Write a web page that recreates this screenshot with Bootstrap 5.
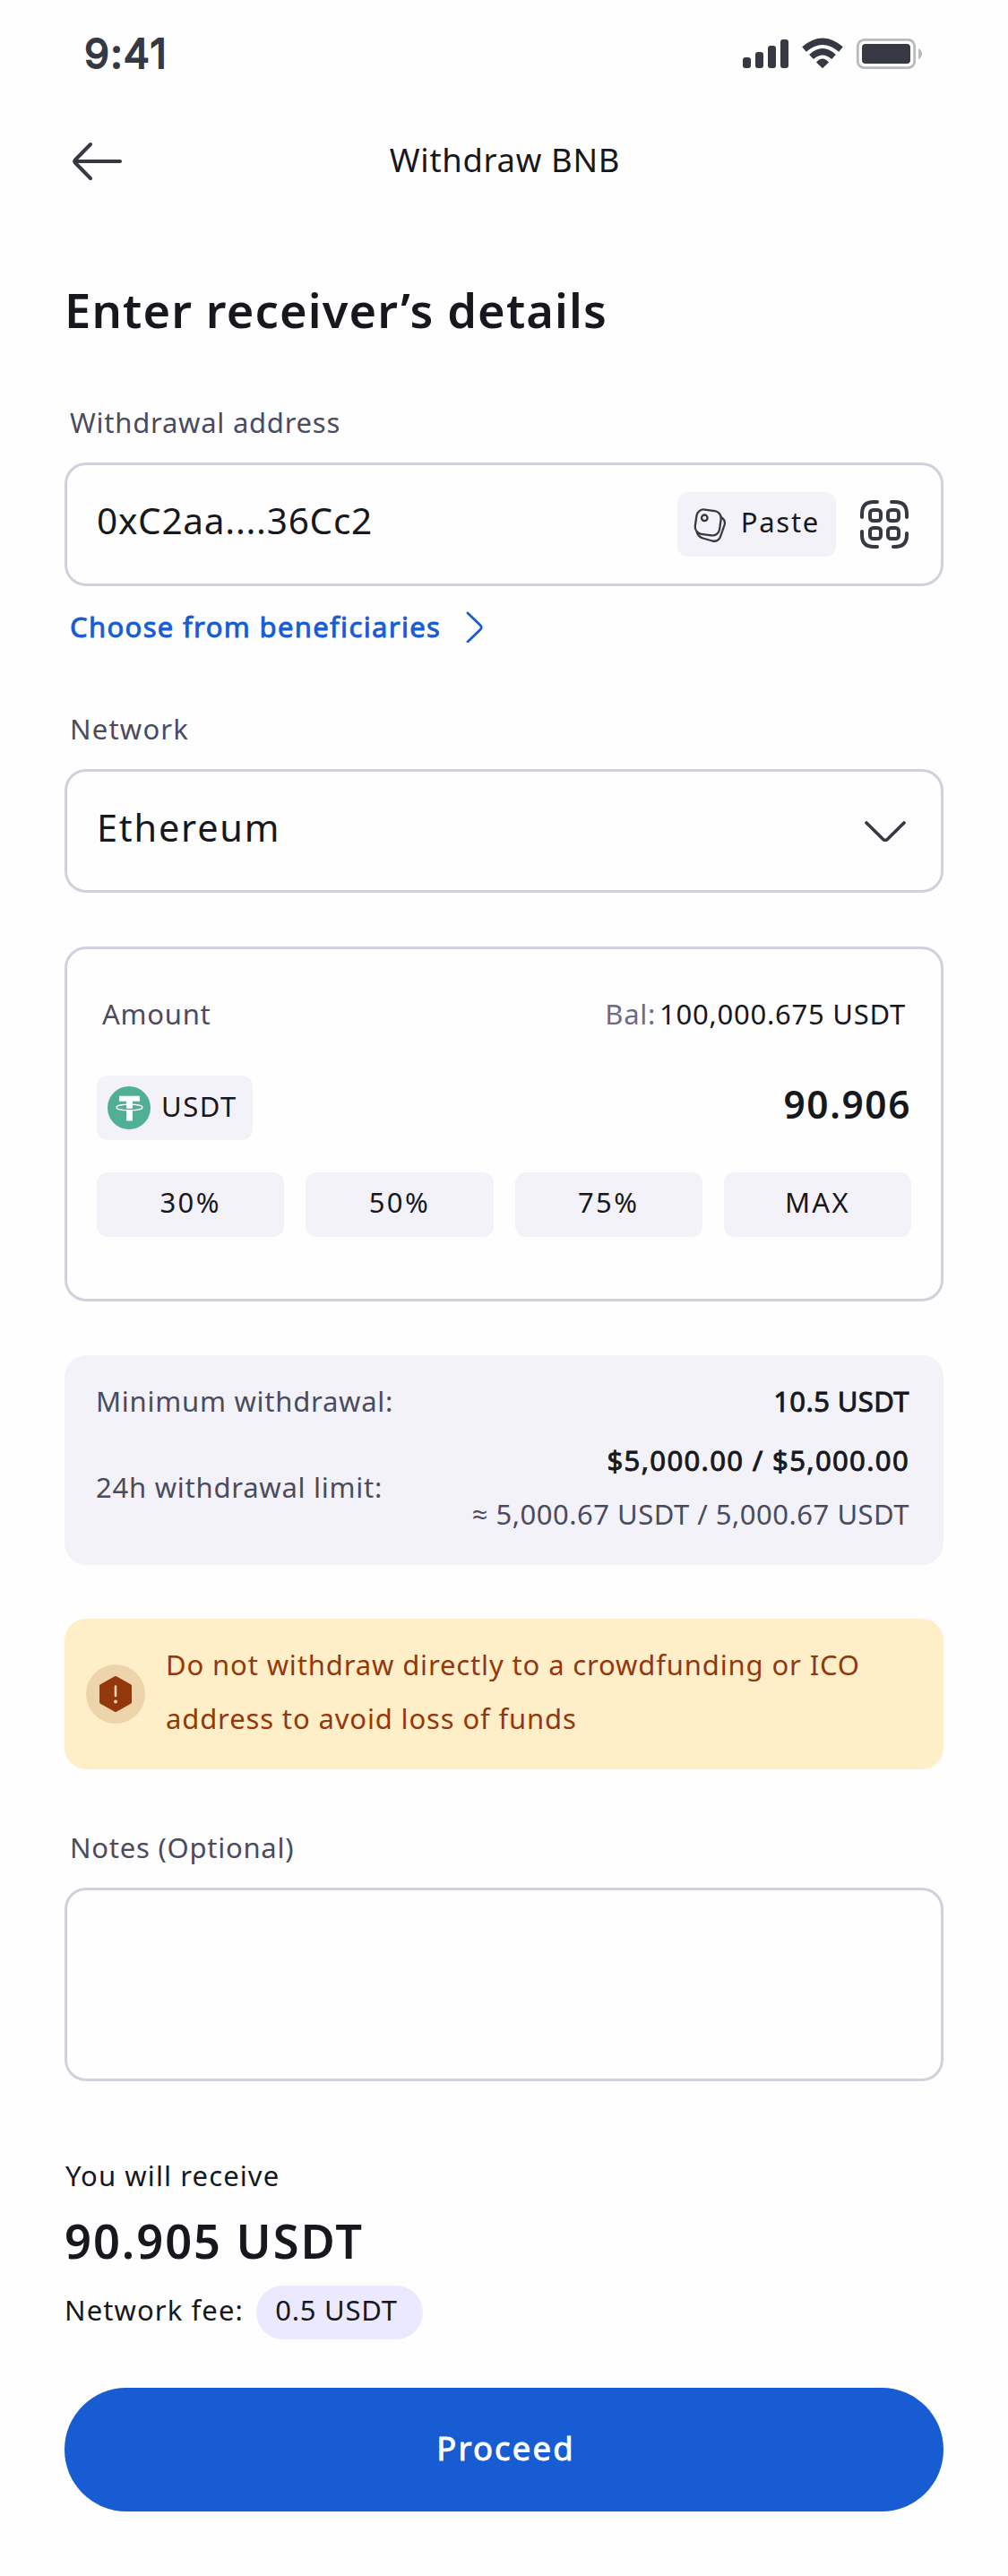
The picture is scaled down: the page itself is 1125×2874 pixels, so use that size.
<!DOCTYPE html>
<html lang="en">
<head>
<meta charset="utf-8">
<meta name="viewport" content="width=device-width, initial-scale=1">
<title>Withdraw BNB</title>
<link href="https://cdn.jsdelivr.net/npm/bootstrap@5.3.0/dist/css/bootstrap.min.css" rel="stylesheet">
<style>
  :root { --ink:#17181e; --soft:#4a4b5e; --line:#d1d0de; --fill:#f3f2f8; --blue:#175cd3; --icon:#363843; }
  body { background:#fefefe; color:var(--ink); font-family:"Noto Sans","Open Sans",sans-serif; font-size:31px; line-height:60px; letter-spacing:.75px; white-space:nowrap; }
  svg { display:block; flex:none; }
  .screen { width:1125px; height:2874px; }
  .status-bar { height:120px; padding:0 95px 0 94px; }
  .clock { font:400 45.2px/60px Inter,sans-serif; letter-spacing:1.4px; color:var(--icon); -webkit-text-stroke:1.8px currentColor; }
  .top-nav { height:120px; padding:0 81px; }
  .top-nav h1 { font-size:36.4px; line-height:60px; letter-spacing:.7px; padding-bottom:4px; }
  .side { width:54px; }
  .page-body { padding:76px 72px 0; }
  .title { font-size:52.4px; line-height:60px; font-weight:600; letter-spacing:1.15px; margin-bottom:65px; }
  .medium { -webkit-text-stroke:.9px currentColor; }
  .soft { color:var(--soft); }
  .field-label { color:var(--soft); padding-left:6px; margin-bottom:15px; display:block; }
  .net-label { letter-spacing:1.2px; }
  .field-box { border:3px solid var(--line); border-radius:24px; background:transparent; }
  .field-row { height:138px; padding:0 33px; }
  .value { font-size:40.5px; padding-bottom:8px; }
  .value.eth { font-size:41.4px; letter-spacing:1.8px; }
  .soft-btn { background:var(--fill); border:0; border-radius:12px; height:72px; color:var(--ink); font-size:31px; line-height:60px; padding:0 0 6px; letter-spacing:2.3px; }
  .paste { width:177px; padding:0 18px 0 17px; }
  .paste span { padding-bottom:6px; letter-spacing:1.7px; }
  .choose { color:var(--blue); padding-left:6px; margin:15px 0 54px; gap:28px; letter-spacing:1.35px; }
  .network { margin-bottom:60px; padding-right:39px; }
  .amount-card { height:396px; padding:42px 33px 0; margin-bottom:60px; }
  .amount-head { padding:0 6px; margin-bottom:39px; }
  .bal { color:#6a6c8c; margin-right:4px; }
  .token { width:174px; padding:0 0 0 12px; gap:12px; letter-spacing:1.5px; }
  .token span { padding-bottom:5px; }
  .amount-value { font-size:42.4px; font-weight:600; letter-spacing:1.6px; padding-bottom:8px; }
  .quick { gap:24px; margin-top:36px; }
  .info { background:var(--fill); border-radius:24px; padding:21px 38px 27px 35px; margin-bottom:60px; color:var(--soft); }
  .strong-ink { color:var(--ink); }
  .min-amount { letter-spacing:.4px; }
  .limit { margin-top:6px; }
  .limit-fiat { letter-spacing:1.35px; }
  .limit-coin { letter-spacing:.5px; }
  .warn { background:#ffefc8; border-radius:24px; color:#93370d; padding:21px 24px 27px; gap:23px; margin-bottom:57px; letter-spacing:.86px; }
  .warn svg { margin-top:6px; }
  .notes { height:216px; resize:none; display:block; margin-bottom:75px; }
  .receive { letter-spacing:1.1px; padding-left:1px; }
  .total { font-size:52.4px; font-weight:600; letter-spacing:1.95px; margin:13px 0 20px; line-height:60px; }
  .fee-label { line-height:54px; padding-bottom:6px; letter-spacing:1.1px; }
  .fee { background:#ebe9fe; border-radius:30px; height:60px; width:186px; line-height:54px; padding-right:7px; }
  .fee-row { gap:14px; }
  .proceed { background:var(--blue); color:#fff; border:0; border-radius:69px; height:138px; font-size:36.4px; letter-spacing:2.2px; margin-top:54px; padding:0 0 4px 4px; }
</style>
</head>
<body>
<div class="screen">
  <div class="status-bar d-flex justify-content-between align-items-center">
    <span class="clock">9:41</span>
    <svg width="201" height="36" viewBox="829 42 201 36" fill="#363843">
      <rect x="829" y="64" width="9" height="12" rx="3"/><rect x="843" y="58" width="9" height="18" rx="3"/><rect x="857" y="51" width="9" height="25" rx="3"/><rect x="871" y="44" width="9" height="32" rx="3"/>
      <path d="M897.500 55Q918 37.500 938.500 55M905.500 63.500Q918 52 930.500 63.500" fill="none" stroke="#363843" stroke-width="7"/>
      <path d="M911 69.500Q918 61.500 925 69.500L918 76.200Z"/>
      <rect x="957.300" y="44.300" width="63.400" height="31.400" rx="7.500" fill="none" stroke="#b9b9be" stroke-width="2.800"/>
      <rect x="962" y="49" width="54" height="22" rx="4"/><path d="M1025 54Q1029 56 1029 60T1025 66Z" fill="#b9b9be"/>
    </svg>
  </div>
  <nav class="top-nav d-flex justify-content-between align-items-center">
    <svg width="56" height="44" viewBox="0 0 56 44" fill="none" stroke="#363843" stroke-width="4" stroke-linecap="round" stroke-linejoin="round"><path d="M2 22H53M20 3L2.800 20.500Q1.500 22 2.800 23.500L20 41"/></svg>
    <h1 class="m-0 fw-normal">Withdraw BNB</h1>
    <span class="side"></span>
  </nav>
  <main class="page-body">
    <h2 class="title">Enter receiver’s details</h2>

    <label class="field-label">Withdrawal address</label>
    <div class="field-box field-row d-flex align-items-center">
      <span class="value me-auto">0xC2aa....36Cc2</span>
      <button class="soft-btn paste d-flex align-items-center justify-content-between">
        <svg width="38" height="40" viewBox="-1 -2 38 40" fill="none" stroke="#363843" stroke-width="2.300" stroke-linecap="round"><rect x="2.500" y="2.200" width="27.500" height="27.500" rx="8" transform="rotate(8 16.200 16)"/><circle cx="12.300" cy="10.800" r="3.300"/><path d="M31.500 10.500C34.500 12.500 35.500 15 34.600 18.500L30.500 30.500C29 35.500 26 37.500 21 36.500L10.500 33.500C7 32.500 5 30 3.800 27"/></svg>
        <span>Paste</span>
      </button>
      <svg class="ms-4" width="60" height="54" viewBox="-3 0 60 54" fill="none" stroke="#363843" stroke-width="4" stroke-linecap="round"><path d="M2 19V15Q2 2 15 2H19M35 2H39Q52 2 52 15V19M2 35V39Q2 52 15 52H19M52 37V39Q52 52 39 52H37"/><rect x="11" y="11" width="12" height="12" rx="3.500"/><rect x="31" y="11" width="12" height="12" rx="3.500"/><rect x="11" y="31" width="12" height="12" rx="3.500"/><rect x="31" y="31" width="12" height="12" rx="3.500"/></svg>
    </div>
    <a class="choose d-flex align-items-center text-decoration-none" href="#"><span class="medium">Choose from beneficiaries</span>
      <svg width="20" height="36" viewBox="0 -1 20 36" fill="none" stroke="#175cd3" stroke-width="2.800" stroke-linecap="round" stroke-linejoin="round"><path d="M2 2L16 15.500Q18.500 18 16 20.500L2 34"/></svg></a>

    <label class="field-label net-label">Network</label>
    <div class="field-box field-row network d-flex align-items-center justify-content-between">
      <span class="value eth">Ethereum</span>
      <svg width="46" height="24" viewBox="0 -1 46 24" fill="none" stroke="#363843" stroke-width="3.600" stroke-linecap="round" stroke-linejoin="round"><path d="M2 2L20.500 20.200Q23 22.500 25.500 20.200L44 2"/></svg>
    </div>

    <section class="field-box amount-card">
      <div class="amount-head d-flex justify-content-between">
        <span class="soft">Amount</span>
        <span class="d-flex"><span class="bal">Bal:</span><span>100,000.675 USDT</span></span>
      </div>
      <div class="d-flex justify-content-between align-items-center">
        <button class="soft-btn token d-flex align-items-center">
          <svg width="48" height="48" viewBox="0 0 48 48"><circle cx="24" cy="24" r="24" fill="#50af95"/><path d="M13 10.700H36V16.700H28V38.500H21V16.700H13Z" fill="#fff"/><path d="M20.500 25.200Q24.500 25.700 28.500 25.200" fill="none" stroke="#50af95" stroke-width="1.500"/><ellipse cx="24.500" cy="23.400" rx="14.500" ry="3.300" fill="none" stroke="#fff" stroke-width="1.200"/></svg>
          <span>USDT</span>
        </button>
        <span class="amount-value">90.906</span>
      </div>
      <div class="quick d-flex">
        <button class="soft-btn flex-fill w-25">30%</button>
        <button class="soft-btn flex-fill w-25">50%</button>
        <button class="soft-btn flex-fill w-25">75%</button>
        <button class="soft-btn flex-fill w-25">MAX</button>
      </div>
    </section>

    <section class="info">
      <div class="d-flex justify-content-between"><span>Minimum withdrawal:</span><span class="strong-ink medium min-amount">10.5 USDT</span></div>
      <div class="limit d-flex justify-content-between align-items-center">
        <span>24h withdrawal limit:</span>
        <div class="text-end"><div class="strong-ink medium limit-fiat">$5,000.00 / $5,000.00</div><div class="limit-coin">≈ 5,000.67 USDT / 5,000.67 USDT</div></div>
      </div>
    </section>

    <div class="warn d-flex align-items-center">
      <svg width="66" height="66" viewBox="0 0 66 66"><circle cx="33" cy="33" r="33" fill="#edd4ab"/><path d="M33 15L49 24V42L33 51L17 42V24Z" fill="#93370d" stroke="#93370d" stroke-width="4" stroke-linejoin="round"/><path d="M33 24.500V35" stroke="#edd4ab" stroke-width="2.600" stroke-linecap="round"/><circle cx="33" cy="41.500" r="2" fill="#edd4ab"/></svg>
      <div>Do not withdraw directly to a crowdfunding or ICO<br>address to avoid loss of funds</div>
    </div>

    <label class="field-label" for="notes">Notes (Optional)</label>
    <textarea id="notes" class="field-box notes w-100"></textarea>

    <div class="receive">You will receive</div>
    <div class="total">90.905 USDT</div>
    <div class="fee-row d-flex align-items-center"><span class="fee-label">Network fee:</span><span class="fee text-center d-block">0.5 USDT</span></div>
    <button class="proceed w-100"><span class="medium">Proceed</span></button>
  </main>
</div>
<script src="https://cdn.jsdelivr.net/npm/bootstrap@5.3.0/dist/js/bootstrap.bundle.min.js"></script>
</body>
</html>
